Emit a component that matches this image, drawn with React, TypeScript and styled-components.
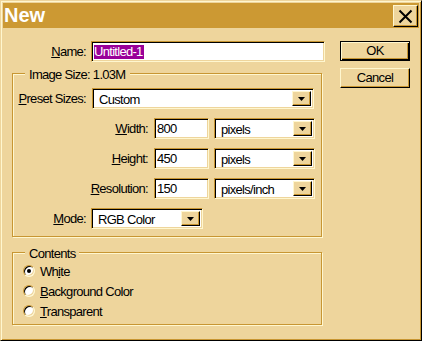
import React from "react";
import styled, { createGlobalStyle, css } from "styled-components";

const FACE = "#EED59C";
const LIGHT = "#FFF7CF";
const SHADOW = "#C89632";
const TITLE = "#CC9933";
const FONT = `"Liberation Sans", Arial, sans-serif`;

const Global = createGlobalStyle`
  html, body { margin: 0; padding: 0; background: ${FACE}; }
  * { box-sizing: border-box; }
`;

const Window = styled.div`
  width: 422px;
  height: 341px;
  background: ${FACE};
  border: 1px solid;
  border-color: ${FACE} #000 #000 ${FACE};
  box-shadow: inset 1px 1px 0 ${LIGHT}, inset -1px -1px 0 ${SHADOW};
  padding: 2px;
  font-family: ${FONT};
  font-size: 13px;
  letter-spacing: -0.7px;
  color: #000;
  display: flex;
  flex-direction: column;
`;

const TitleBar = styled.div`
  height: 25px;
  background: ${TITLE};
  display: flex;
  align-items: flex-start;
  justify-content: space-between;
  padding-left: 1px;
`;

const TitleText = styled.span`
  font-family: "Liberation Sans", Arial, sans-serif;
  font-weight: bold;
  font-size: 20px;
  letter-spacing: 0;
  line-height: 25px;
  color: #fff;
`;

const CloseButton = styled.button`
  width: 25px;
  height: 22px;
  margin-top: 2px;
  margin-right: 1px;
  padding: 0;
  background: ${FACE};
  border: 1px solid;
  border-color: ${LIGHT} #000 #000 ${LIGHT};
  box-shadow: inset -1px -1px 0 ${SHADOW};
  display: flex;
  align-items: center;
  justify-content: center;
`;

const Body = styled.div`
  display: flex;
  gap: 15px;
  padding: 13px 10px 0 9px;
`;

const LeftColumn = styled.div`
  width: 313px;
  display: flex;
  flex-direction: column;
`;

const RightColumn = styled.div`
  width: 70px;
  display: flex;
  flex-direction: column;
  gap: 7px;
`;

const Row = styled.div<{ $mt?: number }>`
  display: flex;
  align-items: center;
  height: 21px;
  margin-top: ${(p) => p.$mt ?? 0}px;
`;

const Label = styled.label<{ $w: number; $gap: number }>`
  width: ${(p) => p.$w}px;
  margin-right: ${(p) => p.$gap}px;
  text-align: right;
  white-space: nowrap;
  line-height: 21px;
`;

const sunken = css`
  border: 1px solid;
  border-color: ${SHADOW} ${LIGHT} ${LIGHT} ${SHADOW};
  box-shadow: inset 1px 1px 0 #000, inset -1px -1px 0 ${FACE};
  background: #fff;
`;

const TextBox = styled.div<{ $w: number }>`
  ${sunken};
  width: ${(p) => p.$w}px;
  height: 21px;
  padding: 1px 2px;
  display: flex;
  align-items: center;
  white-space: nowrap;
`;

const Selected = styled.span`
  background: #990099;
  color: #fff;
  line-height: 14px;
  padding: 0 1px 0 0;
`;

const Select = styled.div<{ $w: number }>`
  ${sunken};
  width: ${(p) => p.$w}px;
  height: 21px;
  padding: 2px;
  display: flex;
  align-items: stretch;
`;

const SelectValue = styled.span`
  flex: 1;
  padding-left: 4px;
  line-height: 17px;
  white-space: nowrap;
`;

const ArrowButton = styled.span`
  width: 19px;
  background: ${FACE};
  border: 1px solid;
  border-color: ${LIGHT} #000 #000 ${LIGHT};
  box-shadow: inset -1px -1px 0 ${SHADOW};
  display: flex;
  align-items: center;
  justify-content: center;
`;

const Group = styled.div<{ $mt: number; $pb: number }>`
  width: 310px;
  margin-top: ${(p) => p.$mt}px;
  padding-bottom: ${(p) => p.$pb}px;
  border: 1px solid ${SHADOW};
  box-shadow: 1px 1px 0 ${LIGHT}, inset 1px 1px 0 ${LIGHT};
  display: flex;
  flex-direction: column;
`;

const Legend = styled.div`
  align-self: flex-start;
  margin: -6px 0 0 12px;
  padding: 0 4px;
  background: ${FACE};
  line-height: 14px;
  white-space: nowrap;
`;

const RadioRow = styled.div`
  display: flex;
  align-items: center;
  height: 20px;
  padding-left: 10px;
  gap: 5px;
`;

const Radio = styled.span<{ $checked?: boolean }>`
  width: 12px;
  height: 12px;
  border-radius: 50%;
  border: 1px solid;
  border-color: ${SHADOW} ${LIGHT} ${LIGHT} ${SHADOW};
  box-shadow: inset 1px 1px 0 #000, inset -1px -1px 0 ${FACE};
  background: #fff;
  display: flex;
  align-items: center;
  justify-content: center;
  &::after {
    content: "";
    width: 4px;
    height: 4px;
    border-radius: 50%;
    background: ${(p) => (p.$checked ? "#000" : "transparent")};
  }
`;

const Button = styled.button<{ $default?: boolean }>`
  width: 70px;
  height: 20px;
  padding: 0;
  font-family: ${FONT};
  font-size: 13px;
  letter-spacing: -0.7px;
  line-height: 16px;
  color: #000;
  background: ${FACE};
  border: 1px solid;
  border-color: ${(p) => (p.$default ? "#000" : `${LIGHT} #000 #000 ${LIGHT}`)};
  box-shadow: ${(p) =>
    p.$default
      ? `inset 1px 1px 0 ${LIGHT}, inset -1px -1px 0 #000, inset -2px -2px 0 ${SHADOW}`
      : `inset -1px -1px 0 ${SHADOW}`};
`;

const Arrow = () => (
  <svg width="7" height="4" viewBox="0 0 7 4">
    <path d="M0 0H7L3.5 4Z" fill="#000" />
  </svg>
);

const DropDown = ({ w, value }: { w: number; value: string }) => (
  <Select $w={w}>
    <SelectValue>{value}</SelectValue>
    <ArrowButton>
      <Arrow />
    </ArrowButton>
  </Select>
);

export default function App() {
  return (
    <>
      <Global />
      <Window>
        <TitleBar>
          <TitleText>New</TitleText>
          <CloseButton aria-label="Close">
            <svg width="15" height="15" viewBox="0 0 15 15">
              <path d="M1.5 1.5L13.5 13.5M13.5 1.5L1.5 13.5" stroke="#000" strokeWidth="2" />
            </svg>
          </CloseButton>
        </TitleBar>
        <Body>
          <LeftColumn>
            <Row>
              <Label $w={74} $gap={5}>
                <u>N</u>ame:
              </Label>
              <TextBox $w={234}>
                <Selected>Untitled-1</Selected>
              </TextBox>
            </Row>
            <Group $mt={11} $pb={7}>
              <Legend>Image Size: 1.03M</Legend>
              <Row $mt={6}>
                <Label $w={73} $gap={6}>
                  <u>P</u>reset Sizes:
                </Label>
                <DropDown w={222} value="Custom" />
              </Row>
              <Row $mt={9}>
                <Label $w={135} $gap={6}>
                  <u>W</u>idth:
                </Label>
                <TextBox $w={55}>800</TextBox>
                <Label $w={0} $gap={5} />
                <DropDown w={101} value="pixels" />
              </Row>
              <Row $mt={9}>
                <Label $w={135} $gap={6}>
                  <u>H</u>eight:
                </Label>
                <TextBox $w={55}>450</TextBox>
                <Label $w={0} $gap={5} />
                <DropDown w={101} value="pixels" />
              </Row>
              <Row $mt={9}>
                <Label $w={135} $gap={6}>
                  <u>R</u>esolution:
                </Label>
                <TextBox $w={55}>150</TextBox>
                <Label $w={0} $gap={5} />
                <DropDown w={101} value="pixels/inch" />
              </Row>
              <Row $mt={9}>
                <Label $w={73} $gap={5}>
                  <u>M</u>ode:
                </Label>
                <DropDown w={112} value="RGB Color" />
              </Row>
            </Group>
            <Group $mt={15} $pb={3}>
              <Legend>Contents</Legend>
              <RadioRow>
                <Radio $checked />
                <span>
                  Wh<u>i</u>te
                </span>
              </RadioRow>
              <RadioRow>
                <Radio />
                <span>
                  <u>B</u>ackground Color
                </span>
              </RadioRow>
              <RadioRow>
                <Radio />
                <span>
                  <u>T</u>ransparent
                </span>
              </RadioRow>
            </Group>
          </LeftColumn>
          <RightColumn>
            <Button $default>OK</Button>
            <Button>Cancel</Button>
          </RightColumn>
        </Body>
      </Window>
    </>
  );
}
